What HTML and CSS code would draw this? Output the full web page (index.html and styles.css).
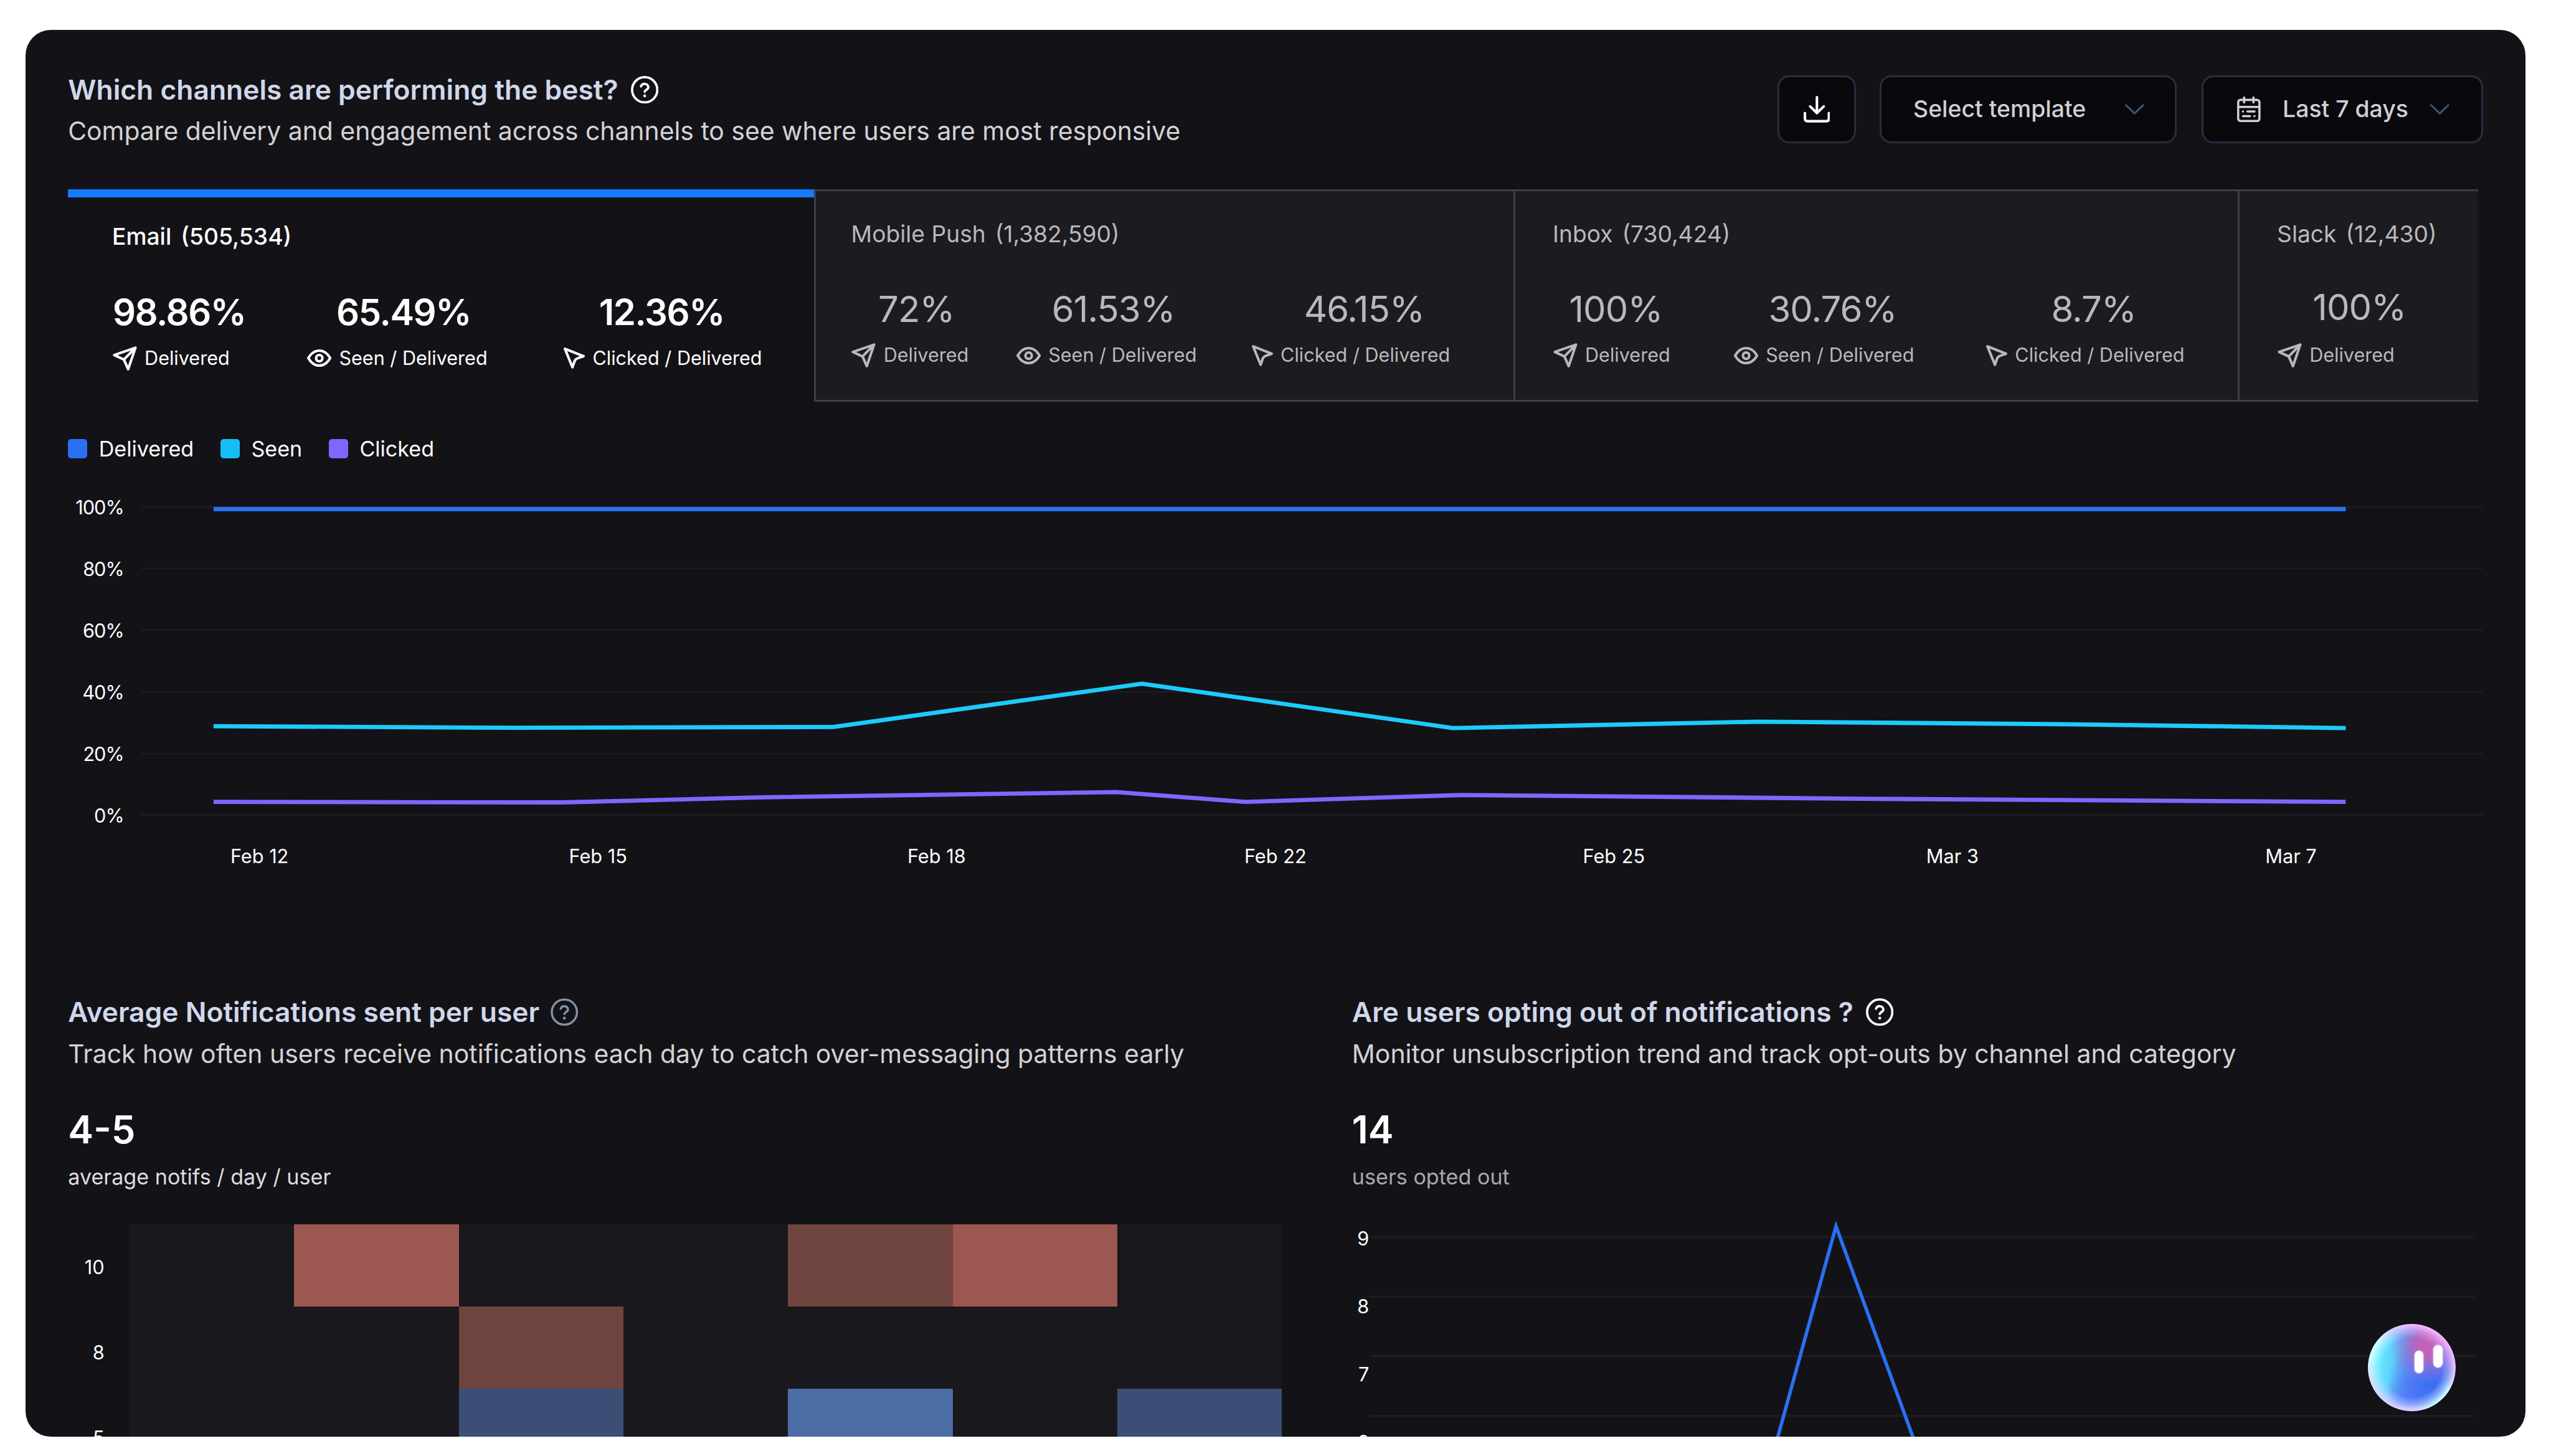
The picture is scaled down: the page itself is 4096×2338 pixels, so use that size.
FILE: index.html
```html
<!DOCTYPE html>
<html lang="en">
<head>
<meta charset="utf-8">
<title>Channel analytics</title>
<link rel="stylesheet" href="styles.css">
</head>
<body>
<svg class="sprite" aria-hidden="true">
  <symbol id="i-send" viewBox="0 0 46 46"><path d="M42.7 2.8 2.8 16.6 21 25 29 43.2Z M42.7 2.8 21 25"/></symbol>
  <symbol id="i-eye" viewBox="0 0 46 33"><path d="M2.4 16.5C7.5 7.5 14.5 2.4 23 2.4S38.5 7.5 43.6 16.5C38.5 25.5 31.5 30.6 23 30.6S7.5 25.5 2.4 16.5Z"/><circle cx="23" cy="16.5" r="6"/></symbol>
  <symbol id="i-cursor" viewBox="0 0 40 40"><path d="M2.5 2.6 37.4 16.4 25.5 20.6Q21.8 22 20.6 25.5L16.6 37.2Z"/></symbol>
  <symbol id="i-help" viewBox="0 0 52 52"><circle cx="26" cy="26" r="23.7"/><path d="M19 19.6A7.2 7.2 0 0 1 32.9 21.2C32.9 25.6 26 26.6 26 29.6"/><circle class="dot" cx="26" cy="37.4" r="2.7"/></symbol>
  <symbol id="i-chevron" viewBox="0 0 36 20"><path d="M1.8 2.2 18 17.6 34.2 2.2"/></symbol>
</svg>

<main class="card">
  <header class="header">
    <div class="heading">
      <h1 class="title">Which channels are performing the best?<svg class="icon help"><use href="#i-help"/></svg></h1>
      <p class="subtitle">Compare delivery and engagement across channels to see where users are most responsive</p>
    </div>
    <div class="actions">
      <button class="btn btn-icon" aria-label="Download">
        <svg class="icon download" viewBox="0 0 50 50"><path d="M25 2.4V32.5M12.3 19.8 25 32.2 37.8 19.8M2.4 32.2V42.6Q2.4 47.6 7.4 47.6H42.6Q47.6 47.6 47.6 42.6V32.2"/></svg>
      </button>
      <button class="btn btn-template"><span>Select template</span><svg class="icon chevron"><use href="#i-chevron"/></svg></button>
      <button class="btn btn-date">
        <svg class="icon calendar" viewBox="0 0 44 48"><rect x="2" y="6.3" width="40" height="39.7" rx="4.5"/><path d="M2 19.6H42M13.2 2V11M30.8 2V11M19.6 28.2H32.8M11 37H24.2M11 28.2H11.1M32.6 37H32.7"/></svg>
        <span>Last 7 days</span><svg class="icon chevron"><use href="#i-chevron"/></svg>
      </button>
    </div>
  </header>

  <nav class="tabs">
    <section class="tab tab-email">
      <h2 class="tab-title"><span>Email</span><span>(505,534)</span></h2>
      <div class="stats">
        <div class="stat"><div class="value">98.86%</div><div class="label"><svg class="icon send"><use href="#i-send"/></svg>Delivered</div></div>
        <div class="stat"><div class="value">65.49%</div><div class="label"><svg class="icon eye"><use href="#i-eye"/></svg>Seen / Delivered</div></div>
        <div class="stat"><div class="value">12.36%</div><div class="label"><svg class="icon cursor"><use href="#i-cursor"/></svg>Clicked / Delivered</div></div>
      </div>
    </section>
    <section class="tab tab-push">
      <h2 class="tab-title"><span>Mobile Push</span><span>(1,382,590)</span></h2>
      <div class="stats">
        <div class="stat"><div class="value">72%</div><div class="label"><svg class="icon send"><use href="#i-send"/></svg>Delivered</div></div>
        <div class="stat"><div class="value">61.53%</div><div class="label"><svg class="icon eye"><use href="#i-eye"/></svg>Seen / Delivered</div></div>
        <div class="stat"><div class="value">46.15%</div><div class="label"><svg class="icon cursor"><use href="#i-cursor"/></svg>Clicked / Delivered</div></div>
      </div>
    </section>
    <section class="tab tab-inbox">
      <h2 class="tab-title"><span>Inbox</span><span>(730,424)</span></h2>
      <div class="stats">
        <div class="stat"><div class="value">100%</div><div class="label"><svg class="icon send"><use href="#i-send"/></svg>Delivered</div></div>
        <div class="stat"><div class="value">30.76%</div><div class="label"><svg class="icon eye"><use href="#i-eye"/></svg>Seen / Delivered</div></div>
        <div class="stat"><div class="value">8.7%</div><div class="label"><svg class="icon cursor"><use href="#i-cursor"/></svg>Clicked / Delivered</div></div>
      </div>
    </section>
    <section class="tab tab-slack">
      <h2 class="tab-title"><span>Slack</span><span>(12,430)</span></h2>
      <div class="stats">
        <div class="stat"><div class="value">100%</div><div class="label"><svg class="icon send"><use href="#i-send"/></svg>Delivered</div></div>
      </div>
    </section>
  </nav>

  <ul class="legend">
    <li class="delivered"><span>Delivered</span></li>
    <li class="seen"><span>Seen</span></li>
    <li class="clicked"><span>Clicked</span></li>
  </ul>

  <svg class="trend" viewBox="128 900 4546 760">
    <g class="grid">
      <path d="M266 954.5H4672M266 1070H4672M266 1186H4672M266 1302H4672M266 1418H4672M266 1533.5H4672"/>
    </g>
    <g class="axis axis-y">
      <text x="233" y="968">100%</text><text x="233" y="1084">80%</text><text x="233" y="1200">60%</text>
      <text x="233" y="1316">40%</text><text x="233" y="1432">20%</text><text x="233" y="1548">0%</text>
    </g>
    <g class="axis axis-x">
      <text x="488.500" y="1624">Feb 12</text><text x="1125.500" y="1624">Feb 15</text><text x="1762.500" y="1624">Feb 18</text>
      <text x="2400" y="1624">Feb 22</text><text x="3037" y="1624">Feb 25</text><text x="3674" y="1624">Mar 3</text><text x="4311" y="1624">Mar 7</text>
    </g>
    <path class="line line-delivered" d="M402 958H4414"/>
    <path class="line line-seen" d="M402 1366.5 970 1369.5 1568 1368 2149 1286.5 2734 1370 3312 1358 3900 1363 4414 1370"/>
    <path class="line line-clicked" d="M402 1509 1055 1510 1430 1500.5 2100 1490.5 2343 1509 2750 1496 3500 1503 4414 1509"/>
  </svg>

  <div class="panels">
    <section class="panel">
      <h2 class="title title-average">Average Notifications sent per user<svg class="icon help help-muted"><use href="#i-help"/></svg></h2>
      <p class="subtitle">Track how often users receive notifications each day to catch over-messaging patterns early</p>
      <div class="figure">4-5</div>
      <div class="unit">average notifs / day / user</div>
      <div class="heat">
        <div class="heat-axis"><span>10</span><span>8</span><span>5</span></div>
        <div class="heat-grid">
          <i></i><i class="red"></i><i></i><i></i><i class="red-dim"></i><i class="red"></i><i></i>
          <i></i><i></i><i class="red-dim"></i><i></i><i></i><i></i><i></i>
          <i></i><i></i><i class="blue-dim"></i><i></i><i class="blue"></i><i></i><i class="blue-dim"></i>
        </div>
      </div>
    </section>
    <section class="panel">
      <h2 class="title">Are users opting out of notifications ?<svg class="icon help"><use href="#i-help"/></svg></h2>
      <p class="subtitle">Monitor unsubscription trend and track opt-outs by channel and category</p>
      <div class="figure">14</div>
      <div class="unit unit-muted">users opted out</div>
      <svg class="optout" viewBox="2544 2280 2130 424">
        <g class="grid"><path d="M2577 2327.5H4656M2577 2439.5H4656M2577 2551.5H4656M2577 2664H4656"/></g>
        <g class="axis axis-y"><text x="2576" y="2343">9</text><text x="2576" y="2471">8</text><text x="2576" y="2599">7</text><text x="2576" y="2727">6</text></g>
        <path class="spike" d="M3341 2718 3454.5 2307 3604.5 2718"/>
      </svg>
    </section>
  </div>

  <div class="orb"><i></i><i></i></div>
</main>
</body>
</html>
```
FILE: styles.css
```css
/* 1rem = 100 design units; the design canvas is 48rem wide */
html { font-size: 85.3333px; }
* { box-sizing: border-box; margin: 0; padding: 0; }
body {
  width: 48rem; height: 27.4rem; padding: .56rem .48rem; overflow: hidden;
  background: #fff; color: #fff; font-size: .4rem;
  font-family: Inter, "Liberation Sans", sans-serif;
}
.sprite { display: none; }
.icon { display: block; flex: none; fill: none; stroke: currentColor; stroke-width: 4.8; stroke-linecap: round; stroke-linejoin: round; }

.card { position: relative; height: 26.48rem; padding: .81rem .8rem 0; overflow: hidden; border-radius: .48rem; background: #131217; }

.header { display: flex; justify-content: space-between; height: 1.42rem; margin-bottom: .77rem; }
.title { display: flex; align-items: center; gap: .235rem; height: .64rem; font-size: .52rem; line-height: .64rem; font-weight: 600; color: #cfd8ea; white-space: nowrap; }
.title-average { gap: .205rem; }
.subtitle { margin-top: .14rem; font-size: .48rem; line-height: .64rem; color: #d3d2d6; white-space: nowrap; }
.header .subtitle { letter-spacing: -.0005rem; }
.help { width: .52rem; height: .52rem; stroke-width: 4.4; color: #fff; }
.help-muted { color: #8492ad; stroke-width: 4; }
.dot { fill: currentColor; stroke: none; }

.actions { display: flex; gap: .45rem; margin: .05rem 0 0; }
.btn { display: flex; align-items: center; height: 1.275rem; border: .04rem solid #272e3f; border-radius: .22rem; background: #09080d; color: #d0cfd4; font: 500 .438rem/.6rem Inter, "Liberation Sans", sans-serif; white-space: nowrap; }
.btn span { margin-top: -.02rem; }
.btn-icon { width: 1.475rem; justify-content: center; color: #fff; }
.btn-template { width: 5.59rem; padding: 0 .58rem 0 .595rem; justify-content: space-between; }
.btn-date { width: 5.3rem; padding: 0 .6rem 0 .64rem; margin-left: .01rem; }
.btn-date span { margin: -.02rem auto 0 .415rem; }
.download { width: .5rem; height: .5rem; }
.calendar { width: .44rem; height: .48rem; stroke-width: 4.2; }
.chevron { width: .36rem; height: .2rem; stroke-width: 3.6; color: #43526a; }

.tabs { display: flex; height: 4rem; margin-right: .09rem; }
.tab { border: solid #37404e; border-width: .04rem 0 .04rem .04rem; background: #1c1b1f; color: #b9b8bd; padding: .53rem 0 0 .66rem; }
.tab-title { display: flex; gap: .175rem; font-size: .436rem; line-height: .56rem; font-weight: 400; white-space: nowrap; }
.stats { display: flex; margin-top: .73rem; padding-left: .01rem; }
.stat { flex: none; }
.value { font-size: .68rem; line-height: .8rem; letter-spacing: -.016em; white-space: nowrap; }
.label { display: flex; align-items: center; gap: .14rem; margin-top: .235rem; font-size: .3585rem; line-height: .48rem; white-space: nowrap; }
.send { width: .46rem; height: .46rem; }
.eye { width: .46rem; height: .33rem; }
.cursor { width: .4rem; height: .4rem; }

.tab-email { width: 14.04rem; padding: .46rem 0 0 .83rem; border: 0; border-top: .16rem solid #147aff; background: none; color: #fff; }
.tab-email .tab-title { font-weight: 500; }
.tab-email .stats { margin-top: .735rem; }
.tab-email .value { font-weight: 600; letter-spacing: -.025em; }
.tab-email .stat:nth-child(1) { width: 3.66rem; }
.tab-email .stat:nth-child(2) { width: 4.83rem; }
.tab-email .stat:nth-child(2) .value { padding-left: .55rem; }
.tab-email .stat:nth-child(3) .value { padding-left: .66rem; }

.tab-push { width: 13.16rem; }
.tab-push .stat:nth-child(1) { width: 3.1rem; }
.tab-push .stat:nth-child(2) { width: 4.43rem; }
.tab-push .stat:nth-child(1) .value { padding-left: .5rem; }
.tab-push .stat:nth-child(2) .value { padding-left: .665rem; }
.tab-push .stat:nth-child(3) .value { padding-left: .98rem; }

.tab-inbox { width: 13.62rem; padding-left: .7rem; }
.tab-inbox .stat:nth-child(1) { width: 3.4rem; }
.tab-inbox .stat:nth-child(2) { width: 4.75rem; }
.tab-inbox .stat:nth-child(1) .value { padding-left: .3rem; }
.tab-inbox .stat:nth-child(2) .value { padding-left: .65rem; }
.tab-inbox .stat:nth-child(3) .value { padding-left: 1.22rem; }

.tab-slack { width: 4.53rem; padding-left: .71rem; }
.tab-slack .stats { margin-top: .69rem; }
.tab-slack .value { padding-left: .66rem; }
.tab-slack .label { margin-top: .275rem; }

.legend { display: flex; gap: .5rem; height: .48rem; margin-top: .64rem; list-style: none; font-size: .4rem; line-height: .48rem; }
.legend li { display: flex; align-items: center; gap: .22rem; }
.legend li span { padding-top: .03rem; }
.legend li::before { content: ""; width: .36rem; height: .36rem; border-radius: .06rem; background: currentColor; }
.legend .delivered::before { background: #2970f2; }
.legend .seen::before { background: #14bdf5; }
.legend .clicked::before { background: #7f66ff; }

.trend { display: block; width: 45.46rem; height: 7.6rem; margin-top: .32rem; }
.grid { stroke: #1e1d22; stroke-width: 3; }
.axis { fill: #fff; font-size: 36px; }
.axis-y { text-anchor: end; }
.axis-x { text-anchor: middle; }
.trend .axis-y { letter-spacing: -1.2px; }
.line { fill: none; stroke-width: 8; stroke-linejoin: round; }
.line-delivered { stroke: #2970f2; }
.line-seen { stroke: #1ccbf9; }
.line-clicked { stroke: #7f66ff; }

.panels { display: grid; grid-template-columns: 24.16rem 21.3rem; margin-top: 2.13rem; }
.figure { margin-top: .685rem; font-size: .72rem; line-height: .84rem; font-weight: 600; }
.unit { margin-top: .215rem; font-size: .4rem; line-height: .52rem; color: #dddce0; }
.unit-muted { color: #a9a8ad; }

.heat { display: flex; margin-top: .635rem; }
.heat-axis { width: 1.16rem; margin-top: -.01rem; padding-right: .475rem; text-align: right; font-size: .36rem; line-height: 1.61rem; }
.heat-axis span { display: block; }
.heat-grid { display: grid; grid-template: repeat(3, 1.545rem) / repeat(7, 1fr); width: 21.68rem; height: 4.635rem; background: #19181c; }
.red { background: #9c5750; }
.red-dim { background: #6f443f; }
.blue { background: #4b6ca5; }
.blue-dim { background: #3b4f76; }

.optout { display: block; width: 21.3rem; height: 4.24rem; margin-top: .395rem; }
.optout .grid { stroke-width: 4; }
.spike { fill: none; stroke: #2970f2; stroke-width: 6.5; stroke-miterlimit: 10; }

/* floating assistant */
.orb {
  position: absolute; right: 1.31rem; bottom: .48rem; width: 1.65rem; height: 1.65rem; border-radius: 50%;
  display: flex; gap: .19rem; padding: .51rem 0 0 .87rem; overflow: hidden;
  background:
    radial-gradient(circle at 67% 26%, #cc5fb0 0, #b865bd 12%, rgba(150,110,215,.55) 27%, transparent 42%),
    radial-gradient(circle at 76% 70%, #3a6df5 0, #4474f5 18%, rgba(75,120,250,.6) 35%, transparent 52%),
    radial-gradient(circle at 55% 92%, #6a72ff 0, transparent 38%),
    linear-gradient(95deg, #6ff0ff 8%, #5fd2fd 28%, #5a9ce8 52%, #4d74e0 80%);
}
.orb::before {
  content: ""; position: absolute; inset: 0; border-radius: 50%;
  background: linear-gradient(215deg, #ffb5ff 18%, #e9c8ff 34%, #d8ffff 48%, #d8ffff 62%, #e3d0ff 84%);
  -webkit-mask: radial-gradient(circle, transparent 48%, rgba(0,0,0,.4) 59%, #000 70%);
  mask: radial-gradient(circle, transparent 48%, rgba(0,0,0,.4) 59%, #000 70%);
}
.orb i { position: relative; width: .17rem; height: .42rem; border-radius: .09rem; background: #fff; box-shadow: 0 0 .04rem rgba(240,215,255,.9); }
.orb i + i { margin-top: -.11rem; }
```
